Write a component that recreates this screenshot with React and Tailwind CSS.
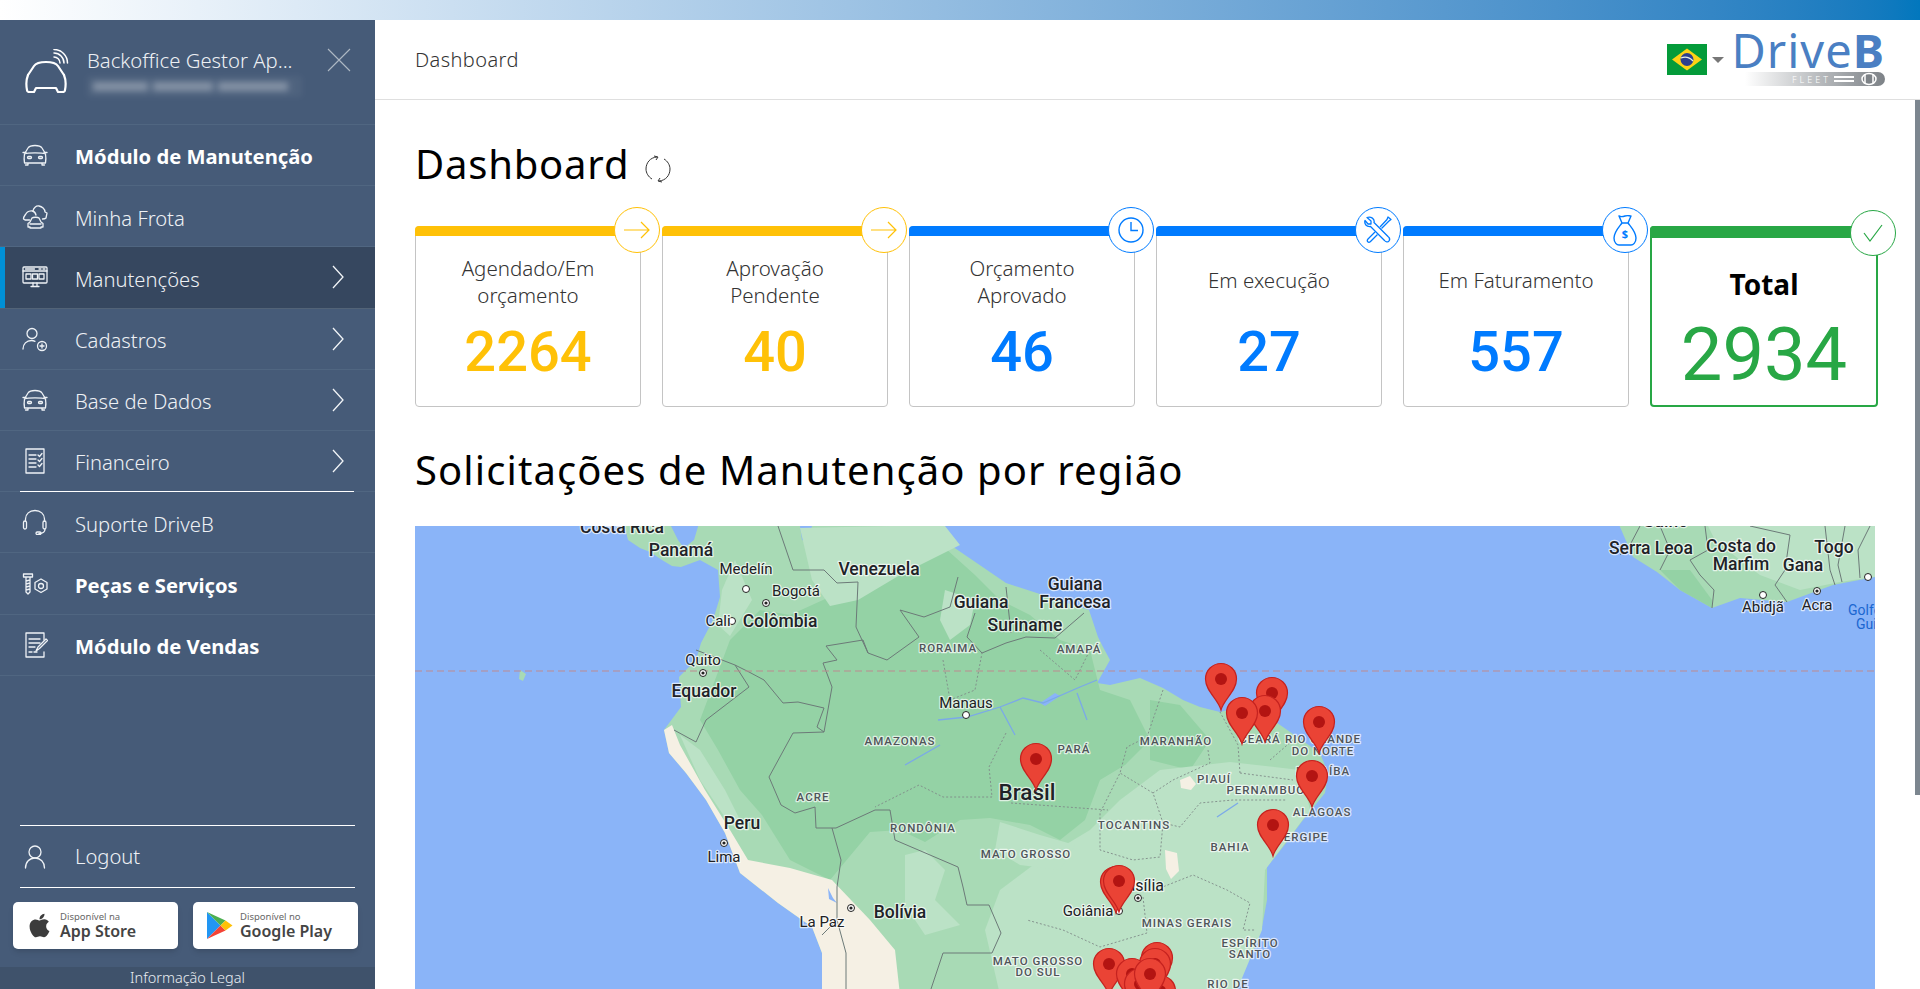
import { FaApple } from "react-icons/fa";

const FONT = "font-['Noto_Sans','Open_Sans',sans-serif]";

function Ico({ children, w = 26, h = 26, className = "" }) {
  return (
    <svg width={w} height={h} viewBox="0 0 26 26" fill="none" stroke="#eef2f6" strokeWidth="1.300" strokeLinecap="round" strokeLinejoin="round" className={className}>
      {children}
    </svg>
  );
}

const CarFront = () => (
  <Ico>
    <path d="M3 11l3-5c1-1.500 3-2.500 7-2.500s6 1 7 2.500l3 5" />
    <path d="M1 10.500h3M22 10.500h3" />
    <path d="M2.500 12c-.5 3-.5 6 0 9h3.500v2h-2.500M23.500 12c.5 3 .5 6 0 9H20v2h2.500M6 21h14M2.500 12C6 10.500 20 10.500 23.500 12" />
    <rect x="5.500" y="14.500" width="4" height="2" rx="1" />
    <rect x="16.500" y="14.500" width="4" height="2" rx="1" />
  </Ico>
);

const Fleet = () => (
  <Ico>
    <path d="M8 24h-2v-3.500l2-1.500 2-4c1-1 6-1 7 0l2 4 2 1.500V24h-2v1H8zM8 21h11" />
    <path d="M7.500 17H3l-1.500-1c0-3 2-4 3-6 1-1.500 4-2.500 6-2 2 .5 3 2 3.500 4" />
    <path d="M11 8c.5-3 3-5.500 6-5 3 .5 6 3 6 6l2 1-1 5c-1 1-2 1-3.500 1" />
  </Ico>
);

const Monitor = () => (
  <Ico>
    <rect x="1" y="3" width="24" height="16" rx="1" />
    <path d="M1 7h24M3.500 5h9M17 5h2M21 5h2M9 22.500h8M11 19v3.500M15 19v3.500" />
    <rect x="4" y="10" width="5" height="5" />
    <rect x="10.500" y="10" width="5" height="5" />
    <rect x="17" y="10" width="5" height="5" />
  </Ico>
);

const PersonPlus = () => (
  <Ico>
    <circle cx="10" cy="7.500" r="5" />
    <path d="M1 23c0-5 3.500-8.500 8.500-8.500 1.500 0 2.500.3 3.500.8" />
    <circle cx="20" cy="20" r="4.500" />
    <path d="M20 18v4M18 20h4" />
  </Ico>
);

const DocList = () => (
  <Ico>
    <rect x="4" y="1" width="18" height="24" />
    <path d="M7 7h7M7 11h7M7 15h7M7 19h7M16 7l1.500 1.500L20 5.500M16 12l1.500 1.500L20 10.500M16 17l1.500 1.500L20 15.500" />
  </Ico>
);

const Headset = () => (
  <Ico>
    <path d="M3.500 12v-2C3.500 5 7.500 1.500 13 1.500S22.500 5 22.500 10v2" />
    <rect x="1.500" y="12" width="3" height="8" rx="1.500" />
    <rect x="21" y="12" width="3" height="8" rx="1.500" />
    <path d="M23 20c0 3-2 4.500-6 4.500" />
    <rect x="14" y="23" width="5" height="2.500" rx="1.200" />
  </Ico>
);

const BoltNut = () => (
  <Ico>
    <path d="M1.500 4h9v3h-9zM4 7v15l2 2 2-2V7M4 11l4-1M4 14l4-1M4 17l4-1M4 20l4-1" />
    <path d="M19 9l6 3.500v6.500l-6 3.500-6-3.500v-6.500z" />
    <circle cx="19" cy="16" r="2.500" />
  </Ico>
);

const DocPen = () => (
  <Ico>
    <path d="M22 8V1H4v24h18v-5" />
    <path d="M7 7h11M7 11h11M7 15h6M7 20h3M12 20h3" />
    <path d="M14 19l2-4 8-8 1.500 1.500-8 8z" />
  </Ico>
);

const Person = () => (
  <Ico>
    <circle cx="13" cy="8" r="6" />
    <path d="M3.500 24c0-6 4-10 9.500-10s9.500 4 9.500 10" />
  </Ico>
);

const Chevron = () => (
  <svg width="14" height="24" viewBox="0 0 14 24" fill="none" stroke="#f2f5f8" strokeWidth="1.300">
    <path d="M2 1l10 11L2 23" />
  </svg>
);

function NavRow({ icon, label, bold, arrow, active }) {
  return (
    <div className={`relative flex h-[61.2px] items-center border-b pl-[22px] ${active ? "border-[#526377] bg-[#36475f]" : "border-[#506681]"}`}>
      {active && <div className="absolute left-0 top-0 h-full w-[5px] bg-[#0090d6]" />}
      <div className="flex w-[53px] items-center">{icon}</div>
      <span className={`flex-1 pt-[3px] text-[20.200px] ${bold ? "font-bold text-white" : "font-light text-[#eef1f5]"}`}>{label}</span>
      {arrow && <div className="mr-[30px] flex"><Chevron /></div>}
    </div>
  );
}

function Sidebar() {
  return (
    <aside className="flex w-[375px] shrink-0 flex-col bg-[#465b78]">
      <div className="relative flex h-[105px] shrink-0 border-b border-[#506681] pl-[25px] pt-[25px]">
        <svg width="46" height="46" viewBox="0 0 46 46" fill="none" stroke="#fff" strokeWidth="2.200" strokeLinecap="round" strokeLinejoin="round" className="mt-[4px] shrink-0">
          <path d="M3 26L9 17C11 14 15 13 21 13C27 13 31 14 33 17L39 26" />
          <path d="M3 26C1 31 1 36 2 41C2 43 3 43 5 43L9 43L11 39L31 39L33 43L37 43C39 43 40 43 40 41C41 36 41 31 39 26" />
          <path d="M29 8A6 6 0 0 1 35 14M29 4A10 10 0 0 1 39 14M29 .5A13.500 13.500 0 0 1 42.500 14" strokeWidth="1.500" />
        </svg>
        <div className="ml-[16px] flex flex-col">
          <span className="text-[20.300px] font-light leading-[30px] text-[#edf0f4]">Backoffice Gestor Ap...</span>
          <div className="mt-[1px] flex h-[21px] w-[215px] items-center gap-[5px] bg-white/5 px-[6px] blur-[3px]">
            <div className="h-[9px] w-[55px] bg-white/30" />
            <div className="h-[9px] w-[60px] bg-white/30" />
            <div className="h-[9px] w-[70px] bg-white/30" />
          </div>
        </div>
        <svg width="24" height="24" viewBox="0 0 24 24" stroke="#aeb8c4" strokeWidth="1.100" className="absolute left-[327px] top-[28px]">
          <path d="M1 1l22 22M23 1L1 23" />
        </svg>
      </div>
      <NavRow icon={<CarFront />} label="Módulo de Manutenção" bold />
      <NavRow icon={<Fleet />} label="Minha Frota" />
      <NavRow icon={<Monitor />} label="Manutenções" arrow active />
      <NavRow icon={<PersonPlus />} label="Cadastros" arrow />
      <NavRow icon={<CarFront />} label="Base de Dados" arrow />
      <div className="relative">
        <NavRow icon={<DocList />} label="Financeiro" arrow />
        <div className="absolute bottom-0 left-[20px] h-px w-[334px] bg-white" />
      </div>
      <NavRow icon={<Headset />} label="Suporte DriveB" />
      <NavRow icon={<BoltNut />} label="Peças e Serviços" bold />
      <NavRow icon={<DocPen />} label="Módulo de Vendas" bold />

      <div className="mx-[20px] mt-auto border-y border-white">
        <div className="flex h-[61px] items-center pl-[2px]">
          <div className="flex w-[53px] items-center"><Person /></div>
          <span className="text-[20.200px] font-light text-[#eef1f5]">Logout</span>
        </div>
      </div>
      <div className="flex gap-[15px] px-[13px] pb-[18px] pt-[14px]">
        <StoreBtn small="Disponível na" big="App Store" icon={<FaApple className="ml-[13px] size-[27px] text-[#3c3c3c]" />} />
        <StoreBtn small="Disponível no" big="Google Play" icon={
          <svg width="26" height="27" viewBox="0 0 26 27" className="ml-[14px]">
            <path d="M0 0v27l13.500-13.500z" fill="#2196f3" />
            <path d="M0 0l13.500 13.500 5-5z" fill="#4caf50" />
            <path d="M0 27l13.500-13.500 5 5z" fill="#f44336" />
            <path d="M18.500 8.500l7 5-7 5-5-5z" fill="#ffc107" />
          </svg>
        } />
      </div>
      <div className="flex h-[22px] items-center justify-center bg-[#3f526b] text-[14.500px] font-light text-[#e9edf2]">Informação Legal</div>
    </aside>
  );
}

function StoreBtn({ small, big, icon }) {
  return (
    <div className="flex h-[47px] w-[165px] items-center rounded-[5px] bg-white shadow-md">
      {icon}
      <div className="ml-[7px] flex flex-col">
        <span className="text-[9.500px] leading-[11px] text-[#666]">{small}</span>
        <span className="text-[16px] font-semibold leading-[18px] text-[#444]">{big}</span>
      </div>
    </div>
  );
}

function Logo() {
  return (
    <div className="mb-[4px] flex w-[150px] flex-col items-end">
      <div className="text-[47px] leading-[42px] tracking-[1px] text-[#4a7fc3]">
        <span>Drive</span><span className="font-bold">B</span>
      </div>
      <div className="mt-[1px] flex h-[14px] w-[140px] items-center justify-end rounded-r-full bg-gradient-to-r from-white to-[#7d8287] pr-[5px]">
        <span className="mr-[3px] text-[9px] font-light leading-none tracking-[3px] text-white">FLEET</span>
        <div className="mr-[4px] flex flex-col gap-[2px]">
          <div className="h-[2px] w-[20px] bg-white" />
          <div className="h-[2px] w-[20px] bg-white" />
        </div>
        <svg width="22" height="14" viewBox="0 0 22 14" fill="none" stroke="#fff" strokeWidth="1.500">
          <ellipse cx="11" cy="7" rx="7" ry="5.500" fill="#7d8287" />
          <path d="M7 2v10M15 2v10" />
        </svg>
      </div>
    </div>
  );
}

function Flag() {
  return (
    <svg width="40" height="31" viewBox="0 0 40 31">
      <rect width="40" height="31" fill="#049b3a" />
      <path d="M20 4.500L35 15.500 20 26.500 5 15.500z" fill="#fdd216" />
      <circle cx="20" cy="15.500" r="6.500" fill="#2b3f8f" />
      <path d="M13.800 14c4-1.500 9-.5 12.200 3" stroke="#e8f0e8" strokeWidth="1.200" fill="none" />
    </svg>
  );
}

function CircleBadge({ color, children, total }) {
  return (
    <div className={`absolute right-[-20px] flex h-[46px] w-[46px] items-center justify-center rounded-full border bg-white ${total ? "top-[-18px]" : "top-[-20px]"}`} style={{ borderColor: color, color }}>
      {children}
    </div>
  );
}

const ArrowI = () => (
  <svg width="26" height="18" viewBox="0 0 26 18" fill="none" stroke="currentColor" strokeWidth="1.200">
    <path d="M0 9h25M17 1l8 8-8 8" />
  </svg>
);
const ClockI = () => (
  <svg width="26" height="26" viewBox="0 0 26 26" fill="none" stroke="currentColor" strokeWidth="1.400">
    <circle cx="13" cy="13" r="12" />
    <path d="M13 5v8.500h7" />
  </svg>
);
const ToolsI = () => (
  <svg width="28" height="28" viewBox="0 0 28 28" fill="none" stroke="currentColor" strokeWidth="1.300" strokeLinejoin="round">
    <path d="M3 1.500l4 3.500v3H4L1 4.500C0 8 2.500 11 6.500 10.500l14 14c1 1.500 3.500 2 4.500.5s.5-3.500-1-4.500l-14-14C11 3 7 0 3 1.500z" />
    <path d="M16 11l7-7.500 1-2.500 3 2.500-2 1.500-7.500 7.500M11 16l-7 7c-2 2 .5 4.500 2.500 2.500l7-7" />
  </svg>
);
const BagI = () => (
  <svg width="24" height="32" viewBox="0 0 24 32" fill="none" stroke="currentColor" strokeWidth="1.400" strokeLinejoin="round">
    <path d="M6 2c2 1 3 1 6 0s4 0 6 0l-3 7H9z" />
    <path d="M9 9c-3 4-8 9-8 15 0 5 3 7 5 7h12c2 0 5-2 5-7 0-6-5-11-8-15" />
    <text x="12" y="24" textAnchor="middle" fontSize="11" fontWeight="700" fill="currentColor" stroke="none">$</text>
  </svg>
);
const CheckI = () => (
  <svg width="20" height="18" viewBox="0 0 20 18" fill="none" stroke="currentColor" strokeWidth="1.200">
    <path d="M1 9l6 8L19 1" />
  </svg>
);

function StatCard({ lines, value, color, icon, total }) {
  return (
    <div className={`relative h-[181px] rounded-[4px] ${total ? "border-2" : "border border-[#c4c4c4]"}`} style={total ? { borderColor: color } : undefined}>
      <div className={`${total ? "-mx-[2px] -mt-[2px] h-[12px]" : "-mx-px -mt-px h-[10px]"} rounded-t-[4px]`} style={{ backgroundColor: color }} />
      <CircleBadge color={color} total={total}>{icon}</CircleBadge>
      <div className={`mt-[16px] flex h-[60px] flex-col items-center justify-center text-center leading-[27px] ${total ? "text-[28px] font-bold text-black" : "text-[20.500px] font-light text-[#333]"} ${!total && lines.length === 1 ? "pb-[3px]" : ""}`}>
        {lines.map((l) => <div key={l}>{l}</div>)}
      </div>
      <div className={`flex h-[80px] items-center justify-center font-['Roboto',sans-serif] ${total ? "text-[74px]" : "text-[56px] font-medium"}`} style={{ color }}>
        {value}
      </div>
    </div>
  );
}

const countries = [
  ["Costa Rica", 622, 533], ["Panamá", 681, 556], ["Venezuela", 879, 575], ["Colômbia", 780, 627], ["Equador", 704, 697],
  ["Guiana", 981, 608], ["Guiana", 1075, 590], ["Francesa", 1075, 608], ["Suriname", 1025, 631], ["Peru", 742, 829],
  ["Bolívia", 900, 918], ["Guiné", 1665, 527], ["Serra Leoa", 1651, 554], ["Costa do", 1741, 552], ["Marfim", 1741, 570], ["Gana", 1803, 571], ["Togo", 1834, 553],
];
const cities = [
  ["Medelín", 746, 574], ["Bogotá", 796, 596], ["Cali", 718, 626], ["Quito", 703, 665], ["Manaus", 966, 708], ["Lima", 724, 862],
  ["La Paz", 822, 927], ["Goiânia", 1088, 916], ["Abidjã", 1763, 612], ["Acra", 1817, 610],
];
const states = [
  ["RORAIMA", 948, 652], ["AMAPÁ", 1079, 653], ["AMAZONAS", 900, 745], ["PARÁ", 1074, 753], ["MARANHÃO", 1176, 745], ["PIAUÍ", 1214, 783],
  ["ACRE", 813, 801], ["RONDÔNIA", 923, 832], ["MATO GROSSO", 1026, 858], ["TOCANTINS", 1134, 829], ["BAHIA", 1230, 851],
  ["PERNAMBUCO", 1270, 794], ["CEARÁ", 1260, 743], ["RIO GRANDE", 1323, 743], ["DO NORTE", 1323, 755], ["PARAÍBA", 1323, 775],
  ["ALAGOAS", 1322, 816], ["SERGIPE", 1302, 841], ["MINAS GERAIS", 1187, 927], ["ESPÍRITO", 1250, 947], ["SANTO", 1250, 958],
  ["RIO DE", 1228, 988], ["MATO GROSSO", 1038, 965], ["DO SUL", 1038, 976],
];
const dots = [[746, 589, 0], [766, 603, 1], [732, 621, 0], [703, 673, 1], [966, 715, 0], [724, 843, 1], [851, 908, 1], [1119, 911, 0], [1138, 898, 1], [1763, 595, 0], [1817, 591, 1], [1868, 577, 0]];
const borders = [
  "696,650 735,665 749,687 706,720 696,742 674,730",
  "735,665 749,672 764,680 783,703 798,702 824,708 817,727 824,732",
  "824,732 832,687 823,663 837,660 826,646 863,640 868,653 887,660 919,637 900,610 924,617 950,607 958,577",
  "778,526 793,570 824,570 837,583 858,582 856,627 868,653",
  "824,732 793,733 769,777 781,805 795,813 815,807 816,828 836,828 875,810 890,810",
  "890,810 895,840 958,867 963,887 967,905 989,905 1001,933 992,953 943,953 931,989",
  "832,828 841,860 837,887 837,920 822,935",
  "837,920 846,953 846,989",
  "975,613 967,637 982,653 1006,643 1026,637 1055,638 1084,613",
  "1006,587 1011,633",
  "1640,526 1630,545 1620,555", "1660,526 1670,550 1660,570", "1705,526 1708,550 1690,560 1700,575 1714,590 1712,608",
  "1750,526 1790,535 1785,570 1775,585 1787,602", "1825,526 1830,570 1835,585", "1845,526 1838,565 1842,582", "1870,526 1858,550 1860,578",
];
const stateLines = [
  "1006,733 989,767 992,797 943,797 919,785 875,807",
  "1011,803 1108,810",
  "1163,690 1147,737 1127,747 1120,773 1100,813 1100,850 1133,860 1160,857 1163,823 1153,793 1120,773",
  "1208,750 1210,763 1173,780 1153,793",
  "1163,823 1180,827 1200,803 1233,800 1287,800",
  "1160,888 1193,875 1227,890 1250,903 1243,930 1255,930",
  "1143,897 1147,933 1100,947 1063,930 1027,920",
  "1240,773 1293,780", "1270,760 1293,740", "1240,773 1238,745 1220,712",
  "943,660 950,700 975,690 982,653", "1040,650 1075,680 1090,650",
];
const pins = [
  [1221, 663], [1272, 677], [1265, 695], [1242, 697], [1319, 706], [1312, 760], [1273, 809], [1036, 743],
  [1116, 866], [1119, 865], [1109, 948], [1157, 942], [1155, 948], [1132, 958], [1140, 968], [1160, 975], [1150, 958],
];
const lightBlobs = [
  "800,528 890,526 945,526 960,545 900,575 858,600 830,606 812,580",
  "1090,830 1120,800 1160,770 1230,762 1300,770 1310,810 1265,870 1262,930 1235,995 1000,995 985,930 1000,890 1040,860",
  "945,590 975,600 970,625 950,640 940,620",
  "905,855 925,850 945,870 935,900 960,925 925,935 905,905",
  "1000,822 1040,835 1075,845 1060,870 1020,865 995,850",
  "735,560 752,600 730,636 718,625 722,590",
  "680,735 700,750 725,790 745,830 730,825 700,780",
];
const darkBlobs = [
  "730,640 760,610 790,615 845,590 860,548 900,552 945,548 975,575 1000,600 1030,615 1060,640 1090,650 1100,690 1130,700 1150,740 1125,765 1100,780 1085,820 1060,840 1030,825 990,818 960,820 925,842 900,830 870,832 830,880 790,860 762,815 740,790 718,750 700,720",
  "1150,700 1180,705 1210,740 1190,770 1150,760",
  "1230,850 1262,850 1258,925 1240,940 1232,900",
  "1200,780 1225,785 1215,815 1195,805",
];

function Pin({ x, y }) {
  return (
    <g transform={`translate(${x} ${y})`}>
      <path d="M0 47C-3 36-15.500 28-15.500 16A15.500 15.500 0 1 1 15.500 16C15.500 28 3 36 0 47Z" fill="#ea4335" stroke="#c5221f" strokeWidth="1.200" />
      <circle cx="0" cy="16" r="6" fill="#b31412" />
    </g>
  );
}

function MapView() {
  const halo = "[paint-order:stroke] font-['Roboto',sans-serif]";
  return (
    <div className="h-[463px] w-[1460px] overflow-hidden bg-[#8ab4f8]">
      <svg width="1460" height="463" viewBox="415 526 1460 463">
        {/* south america */}
        <path fill="#a8dab5" d="M623 520L628 540 640 548 650 552 662 560 672 566 681 567 700 560 718 570 720 597 713 620 701 643 696 660 679 677 681 707 664 730 669 753 686 773 706 800 725 833 740 873 778 903 812 927 822 953 822 995 1233 995 1240 973 1253 947 1262 927 1267 900 1267 867 1283 847 1303 820 1325 793 1328 773 1320 753 1283 727 1250 705 1220 712 1200 707 1183 700 1163 688 1140 678 1110 685 1097 683 1110 660 1103 647 1098 637 1089 610 1006 583 987 570 943 540 935 520Z" />
        <path fill="#8ab4f8" d="M668 520L678 540 684 548 694 540 700 520ZM800 526L812 526 808 542 802 540Z" />
        {darkBlobs.map((p) => <polygon key={p} points={p} fill="#94d2a5" />)}
        {lightBlobs.map((p) => <polygon key={p} points={p} fill="#bbe2c6" />)}
        <path fill="#f5f0e4" d="M664 730L669 753 686 773 706 800 725 833 740 873 778 903 812 927 822 953 822 995 900 995 895 950 870 920 832 880 790 868 748 860 730 830 705 790 680 745 672 725Z" />
        <path fill="#f5f0e4" d="M1180 780l10-4 6 8-5 6-10-2ZM1165 850l12 3 2 18-8 8-5-10ZM1135 880l8 2-2 8-8-3Z" />
        <path fill="#8ab4f8" d="M828 888l5 10 4 5-8-4ZM1040 703l15-10 5 3-15 10Z" />
        <path fill="#a8dab5" d="M520 670l6 4-3 7-4-2Z" />
        {/* africa */}
        <path fill="#a8dab5" d="M1617 520L1633 557 1657 572 1680 590 1712 608 1740 598 1787 602 1833 585 1880 576 1880 520Z" />
        <path fill="#bbe2c6" d="M1705 520L1880 520 1880 576 1840 582 1800 590 1760 575 1740 560 1715 540Z" />
        <path fill="#94d2a5" d="M1660 570L1690 570 1712 600 1712 608 1680 590Z" />

        <g fill="none" stroke="#7ba9e8" strokeWidth="1.300">
          <path d="M938 720L967 717 1000 707 1023 698 1043 703 1080 687 1097 680" />
          <path d="M1077 693L1087 720M1217 817L1238 803M1000 707L1015 735M940 745L905 765" />
        </g>
        <g fill="none" stroke="#6c7a78" strokeWidth="1">
          {borders.map((b) => <polyline key={b} points={b} />)}
        </g>
        <g fill="none" stroke="#7f8a88" strokeWidth="0.900" strokeDasharray="2 2">
          {stateLines.map((b) => <polyline key={b} points={b} />)}
        </g>
        <line x1="415" y1="671" x2="1875" y2="671" stroke="#bd8a90" strokeWidth="1" strokeDasharray="7 4" />

        {dots.map(([x, y, cap]) => (
          <g key={`${x}-${y}`}>
            <circle cx={x} cy={y} r="3.500" fill="#fff" stroke="#222" strokeWidth="1" />
            {cap === 1 && <circle cx={x} cy={y} r="1.600" fill="#222" />}
          </g>
        ))}
        <g className={halo} stroke="#ffffffb0" strokeWidth="2.500" strokeLinejoin="round">
          {states.map(([t, x, y]) => (
            <text key={`${t}${x}`} x={x} y={y} textAnchor="middle" fontSize="11.500" fontWeight="500" letterSpacing="1" fill="#4f5459">{t}</text>
          ))}
          {cities.map(([t, x, y]) => (
            <text key={t} x={x} y={y} textAnchor="middle" fontSize="15" fill="#202124">{t}</text>
          ))}
          {countries.map(([t, x, y]) => (
            <text key={`${t}${x}`} x={x} y={y} textAnchor="middle" fontSize="17.500" fontWeight="500" fill="#1f2328">{t}</text>
          ))}
          <text x="1027" y="800" textAnchor="middle" fontSize="22.500" fontWeight="500" fill="#1f2328">Brasil</text>
          <text x="1164" y="891" textAnchor="end" fontSize="16" fill="#202124">Brasília</text>
          <text x="1848" y="615" fontSize="14" fill="#1a66d0" stroke="none">Golfo da</text>
          <text x="1856" y="629" fontSize="14" fill="#1a66d0" stroke="none">Guiné</text>
        </g>
        {pins.map(([x, y]) => <Pin key={`${x}-${y}`} x={x} y={y} />)}
      </svg>
    </div>
  );
}

export default function App() {
  return (
    <div className={`${FONT} relative flex h-screen w-full flex-col overflow-hidden bg-white`}>
      <div className="h-[20px] shrink-0 bg-gradient-to-r from-white to-[#0277bd]" />
      <div className="flex min-h-0 flex-1">
        <Sidebar />
        <main className="flex min-w-0 flex-1 flex-col">
          <header className="flex h-[80px] shrink-0 items-center justify-between border-b border-[#dfdfdf] pl-[40px] pr-[35px]">
            <span className="text-[20px] font-light tracking-[0.4px] text-[#333]">Dashboard</span>
            <div className="flex items-center">
              <Flag />
              <div className="ml-[5px] mr-[11px] h-0 w-0 border-x-[6px] border-t-[6px] border-x-transparent border-t-[#777]" />
              <Logo />
            </div>
          </header>
          <div className="flex min-h-0 flex-1 flex-col pl-[40px] pr-[42px]">
            <div className="flex h-[126px] shrink-0 items-center pt-[2px]">
              <h1 className="text-[40px] tracking-[0.800px] text-black">Dashboard</h1>
              <svg width="28" height="28" viewBox="0 0 28 28" fill="none" stroke="#333" strokeWidth="1" className="ml-[15px] mt-[10px]">
                <path d="M13 2C6 2.500 2 8 2 14C2 18 4.500 22 8 24M10 1l4 1-2 3" />
                <path d="M15 26C22 25.500 26 20 26 14C26 10 23.500 6 20 4M18 27l-4-1 2-3" />
              </svg>
            </div>
            <div className="grid shrink-0 grid-cols-[repeat(5,226px)_228px] gap-[21px]">
              <StatCard lines={["Agendado/Em", "orçamento"]} value="2264" color="#ffc107" icon={<ArrowI />} />
              <StatCard lines={["Aprovação", "Pendente"]} value="40" color="#ffc107" icon={<ArrowI />} />
              <StatCard lines={["Orçamento", "Aprovado"]} value="46" color="#007bff" icon={<ClockI />} />
              <StatCard lines={["Em execução"]} value="27" color="#007bff" icon={<ToolsI />} />
              <StatCard lines={["Em Faturamento"]} value="557" color="#007bff" icon={<BagI />} />
              <StatCard lines={["Total"]} value="2934" color="#28a745" icon={<CheckI />} total />
            </div>
            <h2 className="mb-[29px] mt-[36px] shrink-0 text-[40px] leading-[54px] tracking-[1.100px] text-black">Solicitações de Manutenção por região</h2>
            <MapView />
          </div>
        </main>
      </div>
      <div className="absolute right-0 top-[100px] h-[695px] w-[5px] bg-[#7c868f]" />
    </div>
  );
}
